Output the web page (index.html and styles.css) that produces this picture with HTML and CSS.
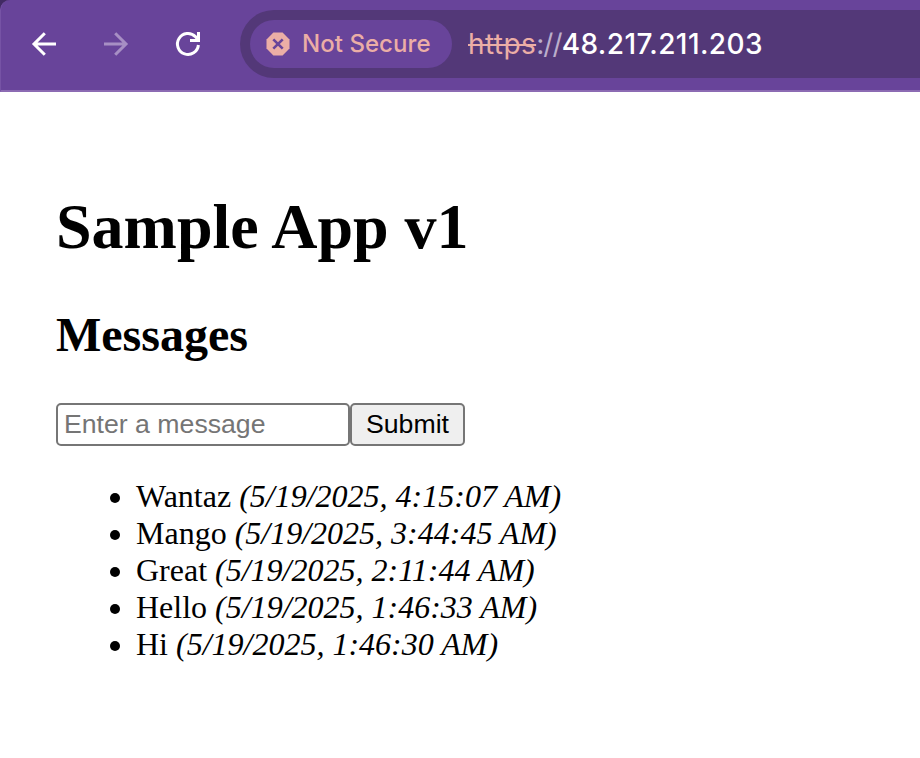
FILE: index.html
```html
<!DOCTYPE html>
<html lang="en">
<head>
<meta charset="utf-8">
<title>Sample App v1</title>
<link rel="stylesheet" href="styles.css">
</head>
<body>
<div class="frame">
<header class="toolbar">
  <nav class="nav">
    <svg class="icon" viewBox="0 0 24 24"><path d="M24 12H2M12.8 1.2L2 12l10.8 10.8"/></svg>
    <svg class="icon icon-disabled" viewBox="0 0 24 24"><path d="M0 12h22M11.2 1.2L22 12 11.2 22.8"/></svg>
    <svg class="icon" viewBox="0 0 24 24"><path d="M22.4 13A10.5 10.5 0 1 1 19.4 4.6L22 7.8M22.5 0v8.5H14"/></svg>
  </nav>
  <div class="address">
    <div class="chip">
      <svg class="warning" viewBox="0 0 24 24"><path class="octagon" d="M7.4 .5h9.2L23.5 7.4v9.2l-6.9 6.9H7.4L.5 16.6V7.4z"/><path class="cross" d="M7.3 7.3l9.4 9.4M16.7 7.3l-9.4 9.4"/></svg>
      <span class="chip-label">Not Secure</span>
    </div>
    <div class="url"><span class="scheme">https</span><span class="separator">://</span><span class="host">48.217.211.203</span></div>
  </div>
</header>
</div>
<main>
  <h1>Sample App v1</h1>
  <h2>Messages</h2>
  <form class="composer">
    <input type="text" placeholder="Enter a message"><button type="button">Submit</button>
  </form>
  <ul>
    <li>Wantaz <em>(5/19/2025, 4:15:07 AM)</em></li>
    <li>Mango <em>(5/19/2025, 3:44:45 AM)</em></li>
    <li>Great <em>(5/19/2025, 2:11:44 AM)</em></li>
    <li>Hello <em>(5/19/2025, 1:46:33 AM)</em></li>
    <li>Hi <em>(5/19/2025, 1:46:30 AM)</em></li>
  </ul>
</main>
</body>
</html>
```
FILE: styles.css
```css
* { box-sizing: border-box; }
body {
  margin: 0;
  background: #fff;
  color: #000;
  font-family: "Liberation Serif", "Times New Roman", serif;
  overflow: hidden;
}
.frame { background: #412a63; }
.toolbar {
  display: flex;
  align-items: flex-start;
  height: 92px;
  background: #68449a;
  border-left: 1px solid #7653a5;
  border-bottom: 2px solid #8c6bb3;
  border-top-left-radius: 10px;
}
.nav {
  display: flex;
  gap: 48px;
  width: 239px;
  padding: 32px 0 0 31px;
}
.icon {
  width: 24px;
  height: 24px;
  fill: none;
  stroke: #fff;
  stroke-width: 3;
  overflow: visible;
}
.icon-disabled { stroke: #a78fc4; }
.address {
  display: flex;
  align-items: center;
  flex: 1;
  height: 68px;
  margin-top: 10px;
  padding-left: 10px;
  background: #533878;
  border-radius: 34px 0 0 34px;
  font-family: Inter, sans-serif;
}
.chip {
  display: flex;
  align-items: center;
  width: 202px;
  height: 48px;
  padding-left: 16px;
  border-radius: 24px;
  background: #68449a;
  color: #ebaea6;
}
.warning { width: 24px; height: 24px; }
.octagon { fill: #ebaea6; }
.cross { stroke: #68449a; stroke-width: 2.6; }
.chip-label {
  margin: -1px 0 0 12px;
  font-size: 24px;
  font-weight: 500;
  letter-spacing: 0.05px;
  white-space: nowrap;
}
.url {
  margin-left: 16px;
  font-size: 28px;
  white-space: nowrap;
}
.scheme {
  color: #ebaea6;
  letter-spacing: 0.4px;
  text-decoration: line-through;
  text-decoration-thickness: 2px;
}
.separator { color: #bbaecb; letter-spacing: -0.9px; }
.host { color: #fff; font-weight: 500; letter-spacing: 0.4px; }
main { padding: 98px 56px 0; }
h1 { margin: 0; font-size: 64px; line-height: 74px; }
h2 { margin: 43px 0 0; font-size: 48px; line-height: 55px; }
.composer { display: flex; margin: 41px 0 0; }
input, button {
  height: 43px;
  margin: 0;
  border: 2px solid #767676;
  border-radius: 5px;
  font-family: "Liberation Sans", Arial, sans-serif;
  font-size: 26.67px;
}
input { width: 294px; padding: 0 6px; background: #fff; }
input::placeholder { color: #757575; }
button { width: 115px; padding: 0; background: #efefef; color: #000; }
ul { margin: 32px 0 0; padding-left: 80px; font-size: 32px; line-height: 37px; }
```
